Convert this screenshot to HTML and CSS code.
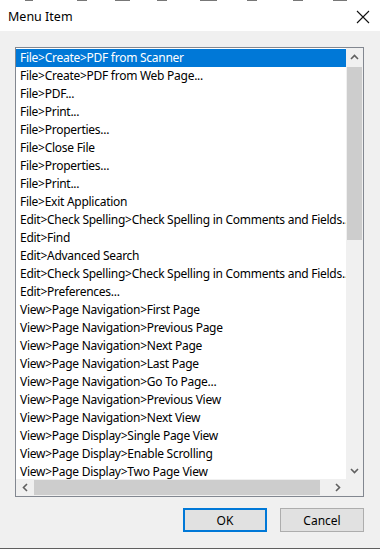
FILE: index.html
```html
<!DOCTYPE html>
<html lang="en">
<head>
  <meta charset="UTF-8">
  <meta name="viewport" content="width=device-width, initial-scale=1.0">
  <title>Menu Item</title>
  <link rel="stylesheet" href="styles.css">
</head>
<body>

  <div class="ventana">
    <div class="borde-superior"></div>

    <div class="barra-titulo">
      <span class="titulo">Menu Item</span>
      <svg class="cerrar" width="14" height="14" viewBox="0 0 14 14">
        <path d="M1 1 L13 13 M13 1 L1 13" stroke="#111" stroke-width="1.1" fill="none"/>
      </svg>
    </div>

    <div class="cuerpo">
      <div class="lista">
        <div class="items">
          <div class="item seleccionado">File&gt;Create&gt;PDF from Scanner</div>
          <div class="item">File&gt;Create&gt;PDF from Web Page...</div>
          <div class="item">File&gt;PDF...</div>
          <div class="item">File&gt;Print...</div>
          <div class="item">File&gt;Properties...</div>
          <div class="item">File&gt;Close File</div>
          <div class="item">File&gt;Properties...</div>
          <div class="item">File&gt;Print...</div>
          <div class="item">File&gt;Exit Application</div>
          <div class="item">Edit&gt;Check Spelling&gt;Check Spelling in Comments and Fields...</div>
          <div class="item">Edit&gt;Find</div>
          <div class="item">Edit&gt;Advanced Search</div>
          <div class="item">Edit&gt;Check Spelling&gt;Check Spelling in Comments and Fields...</div>
          <div class="item">Edit&gt;Preferences...</div>
          <div class="item">View&gt;Page Navigation&gt;First Page</div>
          <div class="item">View&gt;Page Navigation&gt;Previous Page</div>
          <div class="item">View&gt;Page Navigation&gt;Next Page</div>
          <div class="item">View&gt;Page Navigation&gt;Last Page</div>
          <div class="item">View&gt;Page Navigation&gt;Go To Page...</div>
          <div class="item">View&gt;Page Navigation&gt;Previous View</div>
          <div class="item">View&gt;Page Navigation&gt;Next View</div>
          <div class="item">View&gt;Page Display&gt;Single Page View</div>
          <div class="item">View&gt;Page Display&gt;Enable Scrolling</div>
          <div class="item">View&gt;Page Display&gt;Two Page View</div>
        </div>

        <div class="scroll-v">
          <div class="flecha">
            <svg width="9" height="6" viewBox="0 0 9 6"><path d="M1 5 L4.5 1.5 L8 5" stroke="#606060" stroke-width="1.6" fill="none"/></svg>
          </div>
          <div class="pista-v"><div class="pulgar-v"></div></div>
          <div class="flecha">
            <svg width="9" height="6" viewBox="0 0 9 6"><path d="M1 1 L4.5 4.5 L8 1" stroke="#606060" stroke-width="1.6" fill="none"/></svg>
          </div>
        </div>

        <div class="scroll-h">
          <div class="flecha">
            <svg width="6" height="9" viewBox="0 0 6 9"><path d="M5 1 L1.5 4.5 L5 8" stroke="#606060" stroke-width="1.6" fill="none"/></svg>
          </div>
          <div class="pista-h"><div class="pulgar-h"></div></div>
          <div class="flecha">
            <svg width="6" height="9" viewBox="0 0 6 9"><path d="M1 1 L4.5 4.5 L1 8" stroke="#606060" stroke-width="1.6" fill="none"/></svg>
          </div>
        </div>

        <div class="esquina"></div>
      </div>

      <div class="botones">
        <button class="boton boton-defecto">OK</button>
        <button class="boton">Cancel</button>
      </div>
    </div>
  </div>

</body>
</html>
```

FILE: styles.css
```css
body {
  margin: 0;
  font-family: 'Noto Sans', 'Open Sans', sans-serif;
  font-size: 12px;
  color: #000;
  background-color: #f0f0f0;
}

.ventana {
  width: 380px;
  height: 549px;
  display: flex;
  flex-direction: column;
  background-color: #f0f0f0;
  border-bottom: 1px solid #5f5f5f;
  box-sizing: border-box;
  overflow: hidden;
}

/* restos de la ventana de atras */
.borde-superior {
  height: 1px;
  background:
    linear-gradient(90deg,
      transparent 25px, #777 25px, #777 33px, transparent 33px,
      transparent 77px, #777 77px, #777 87px, transparent 87px,
      transparent 115px, #777 115px, #777 130px, transparent 130px,
      transparent 157px, #777 157px, #777 167px, transparent 167px,
      transparent 200px, #777 200px, #777 217px, transparent 217px,
      transparent 247px, #777 247px, #777 257px, transparent 257px,
      transparent 293px, #777 293px, #777 303px, transparent 303px,
      transparent 333px, #777 333px, #777 347px, transparent 347px),
    #fff;
}

.barra-titulo {
  height: 30px;
  background-color: #fff;
  display: flex;
  align-items: center;
  justify-content: space-between;
  padding: 0 10px 0 8px;
}

.titulo {
  font-size: 12.5px;
  margin-top: 1px;
}

.cerrar {
  margin-top: 1px;
}

.cuerpo {
  flex: 1;
  padding: 16px 16px 0 15px;
  display: flex;
  flex-direction: column;
}

.lista {
  height: 450px;
  border: 1px solid #828790;
  background-color: #fff;
  box-sizing: border-box;
  display: grid;
  grid-template-columns: 1fr 17px;
  grid-template-rows: 1fr 17px;
}

.items {
  overflow: hidden;
  padding-top: 1px;
}

.item {
  height: 18px;
  line-height: 18px;
  padding-left: 4px;
  white-space: nowrap;
  letter-spacing: -0.27px;
}

.item.seleccionado {
  background-color: #0078d7;
  color: #fff;
}

.scroll-v {
  background-color: #f0f0f0;
  display: flex;
  flex-direction: column;
}

.scroll-h {
  background-color: #f0f0f0;
  display: flex;
}

.flecha {
  width: 17px;
  height: 17px;
  flex: none;
  display: flex;
  align-items: center;
  justify-content: center;
}

.pista-v {
  flex: 1;
  padding: 2px 1px 0 1px;
}

.pulgar-v {
  height: 173px;
  background-color: #cdcdcd;
}

.pista-h {
  flex: 1;
  padding: 1px 0 1px 1px;
  display: flex;
}

.pulgar-h {
  width: 286px;
  background-color: #cdcdcd;
}

.esquina {
  background-color: #f0f0f0;
}

.botones {
  display: flex;
  justify-content: flex-end;
  gap: 13px;
  margin-top: 11px;
}

.boton {
  width: 84px;
  height: 24px;
  font-family: 'Noto Sans', 'Open Sans', sans-serif;
  font-size: 12px;
  color: #000;
  background-color: #e1e1e1;
  border: 1px solid #adadad;
  padding: 0;
}

.boton-defecto {
  border: 2px solid #0078d7;
}
```
